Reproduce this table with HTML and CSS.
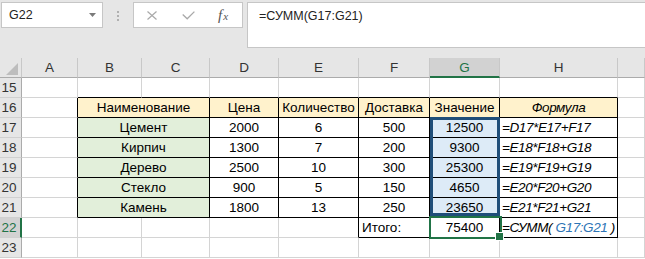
FILE: index.html
```html
<!DOCTYPE html>
<html lang="ru">
<head>
<meta charset="utf-8">
<title>Excel</title>
<link rel="stylesheet" href="styles.css">
</head>
<body>
<div class="app">
  <div class="toolbar">
    <div class="namebox">
      <span>G22</span>
      <svg class="caret" width="7" height="4" viewBox="0 0 7 4"><path d="M0 0H7L3.5 4Z" fill="#7a7a7a"/></svg>
    </div>
    <div class="grip">
      <svg width="2" height="10" viewBox="0 0 2 10"><rect x="0" y="0" width="2" height="2" fill="#b0b0b0"/><rect x="0" y="4" width="2" height="2" fill="#b0b0b0"/><rect x="0" y="8" width="2" height="2" fill="#b0b0b0"/></svg>
    </div>
    <div class="fbtns">
      <svg class="ic-x" width="10" height="9" viewBox="0 0 10 9"><path d="M0.5 0.5L9.5 8.5M9.5 0.5L0.5 8.5" stroke="#a9a9a9" stroke-width="1.2" fill="none"/></svg>
      <svg class="ic-ok" width="13" height="9" viewBox="0 0 13 9"><path d="M0.7 3.6L5.2 7.8L12.4 0.6" stroke="#a9a9a9" stroke-width="1.3" fill="none"/></svg>
      <span class="fx">f<span class="fx-x">x</span></span>
    </div>
    <div class="finput">=СУММ(G17:G21)</div>
  </div>

  <div class="sheet">
    <!-- header -->
    <div class="c hd corner"><svg width="12" height="12" viewBox="0 0 12 12"><path d="M12 0V12H0Z" fill="#bdbdbd"/></svg></div>
    <div class="c hd">A</div>
    <div class="c hd">B</div>
    <div class="c hd">C</div>
    <div class="c hd">D</div>
    <div class="c hd">E</div>
    <div class="c hd">F</div>
    <div class="c hd sel">G</div>
    <div class="c hd">H</div>
    <div class="c hd"></div>

    <!-- 15 -->
    <div class="c rh">15</div>
    <div class="c"></div>
    <div class="c eb"></div>
    <div class="c eb"></div>
    <div class="c eb"></div>
    <div class="c eb"></div>
    <div class="c eb"></div>
    <div class="c eb"></div>
    <div class="c eb"></div>
    <div class="c"></div>

    <!-- 16 -->
    <div class="c rh">16</div>
    <div class="c er"></div>
    <div class="c t y ctr span2">Наименование</div>
    <div class="c t y ctr">Цена</div>
    <div class="c t y ctr">Количество</div>
    <div class="c t y ctr">Доставка</div>
    <div class="c t y ctr">Значение</div>
    <div class="c t y ctr it">Формула</div>
    <div class="c"></div>

    <!-- 17 -->
    <div class="c rh">17</div>
    <div class="c er"></div>
    <div class="c t g ctr span2">Цемент</div>
    <div class="c t ctr">2000</div>
    <div class="c t ctr">6</div>
    <div class="c t ctr">500</div>
    <div class="c t b ctr anchor">12500<div class="range"></div></div>
    <div class="c t it">=D17*E17+F17</div>
    <div class="c"></div>

    <!-- 18 -->
    <div class="c rh">18</div>
    <div class="c er"></div>
    <div class="c t g ctr span2">Кирпич</div>
    <div class="c t ctr">1300</div>
    <div class="c t ctr">7</div>
    <div class="c t ctr">200</div>
    <div class="c t b ctr">9300</div>
    <div class="c t it">=E18*F18+G18</div>
    <div class="c"></div>

    <!-- 19 -->
    <div class="c rh">19</div>
    <div class="c er"></div>
    <div class="c t g ctr span2">Дерево</div>
    <div class="c t ctr">2500</div>
    <div class="c t ctr">10</div>
    <div class="c t ctr">300</div>
    <div class="c t b ctr">25300</div>
    <div class="c t it">=E19*F19+G19</div>
    <div class="c"></div>

    <!-- 20 -->
    <div class="c rh">20</div>
    <div class="c er"></div>
    <div class="c t g ctr span2">Стекло</div>
    <div class="c t ctr">900</div>
    <div class="c t ctr">5</div>
    <div class="c t ctr">150</div>
    <div class="c t b ctr">4650</div>
    <div class="c t it">=E20*F20+G20</div>
    <div class="c"></div>

    <!-- 21 -->
    <div class="c rh">21</div>
    <div class="c er"></div>
    <div class="c t g ctr span2">Камень</div>
    <div class="c t ctr">1800</div>
    <div class="c t ctr">13</div>
    <div class="c t ctr">250</div>
    <div class="c t b ctr">23650</div>
    <div class="c t it">=E21*F21+G21</div>
    <div class="c"></div>

    <!-- 22 -->
    <div class="c rh sel">22</div>
    <div class="c"></div>
    <div class="c"></div>
    <div class="c"></div>
    <div class="c"></div>
    <div class="c er"></div>
    <div class="c t lbl">Итого:</div>
    <div class="c t ctr anchor">75400<div class="active"></div></div>
    <div class="c t it">=СУММ( <span class="ref">G17:G21</span> )</div>
    <div class="c"></div>

    <!-- 23 -->
    <div class="c rh">23</div>
    <div class="c"></div>
    <div class="c"></div>
    <div class="c"></div>
    <div class="c"></div>
    <div class="c"></div>
    <div class="c"></div>
    <div class="c"></div>
    <div class="c"></div>
    <div class="c"></div>
  </div>
</div>
</body>
</html>
```

FILE: styles.css
```css
* { box-sizing: border-box; }
html, body { margin: 0; padding: 0; }
body {
  background: #fff;
  font-family: "Liberation Sans", Arial, sans-serif;
  overflow: hidden;
}
.app { width: 645px; height: 259px; overflow: hidden; }

/* ---------- formula bar ---------- */
.toolbar {
  display: flex;
  align-items: flex-start;
  height: 58px;
  padding: 2px 0 0 1px;
  background: #e6e6e6;
}
.namebox {
  width: 102px;
  height: 26px;
  background: #fff;
  border: 1px solid #c6c6c6;
  display: flex;
  align-items: center;
  justify-content: space-between;
  padding: 0 6px 0 7px;
  font-size: 12.5px;
  color: #222;
}
.caret { margin-top: -1px; }
.grip {
  width: 30px;
  height: 26px;
  display: flex;
  align-items: center;
  justify-content: center;
  padding-top: 1px;
}
.fbtns {
  width: 110px;
  height: 26px;
  background: #fff;
  border: 1px solid #c6c6c6;
  display: flex;
  align-items: center;
}
.ic-x { margin-left: 13px; margin-top: 1px; }
.ic-ok { margin-left: 25px; margin-top: 1px; }
.fx {
  margin-left: 23px;
  font-family: "Liberation Serif", "Times New Roman", serif;
  font-style: italic;
  font-size: 15px;
  color: #555;
  line-height: 1;
}
.fx-x { font-size: 11px; margin-left: 1px; }
.finput {
  flex: 1;
  height: 46px;
  margin-left: 4px;
  background: #fff;
  border: 1px solid #c6c6c6;
  border-right: 0;
  padding: 4px 0 0 11px;
  font-size: 12.5px;
  line-height: 18px;
  color: #222;
}

/* ---------- sheet ---------- */
.sheet {
  width: 645px;
  display: grid;
  grid-template-columns: 22px 56px 64px 68px 69px 80px 71px 70px 118px 1fr;
  grid-auto-rows: 20px;
  font-size: 13.5px;
  line-height: 19px;
  color: #000;
}
.c {
  border-right: 1px solid #d4d4d4;
  border-bottom: 1px solid #d4d4d4;
  white-space: nowrap;
  padding: 0 2px;
}
.hd {
  background: #e6e6e6;
  border-right-color: #c8c8c8;
  border-bottom-color: #ababab;
  text-align: center;
  color: #333;
}
.hd.sel {
  background: #d2d2d2;
  color: #217346;
  border-bottom: 2px solid #217346;
}
.corner {
  display: flex;
  align-items: flex-end;
  justify-content: flex-end;
  padding: 0 3px 2px 0;
}
.corner svg { display: block; }
.rh {
  background: #e6e6e6;
  border-right-color: #ababab;
  border-bottom-color: #d0d0d0;
  text-align: center;
  padding: 0 3px 0 0;
  color: #333;
}
.rh.sel {
  background: #d2d2d2;
  color: #217346;
  border-right: 2px solid #217346;
  padding-right: 2px;
}

.t { border-right-color: #000; border-bottom-color: #000; }
.er { border-right-color: #000; }
.eb { border-bottom-color: #000; }
.y { background: #fff2cc; }
.g { background: #e2efda; }
.b { background: #ddebf7; }
.ctr { text-align: center; }
.it { font-style: italic; letter-spacing: -0.4px; }
.lbl { padding-left: 3px; }
.span2 { grid-column: span 2; }
.ref { color: #2e75b6; }

/* selection overlays */
.anchor { position: relative; }
.range {
  position: absolute;
  left: 0;
  top: -1px;
  width: 70px;
  height: 99px;
  border: 3px solid #1f4e79;
  pointer-events: none;
}
.active {
  position: absolute;
  left: -1px;
  top: -2px;
  width: 73px;
  height: 23px;
  border: 2px solid #217346;
  pointer-events: none;
}
.active::after {
  content: "";
  position: absolute;
  right: -4px;
  bottom: -4px;
  width: 7px;
  height: 7px;
  background: #217346;
  border: 1px solid #fff;
}
```
